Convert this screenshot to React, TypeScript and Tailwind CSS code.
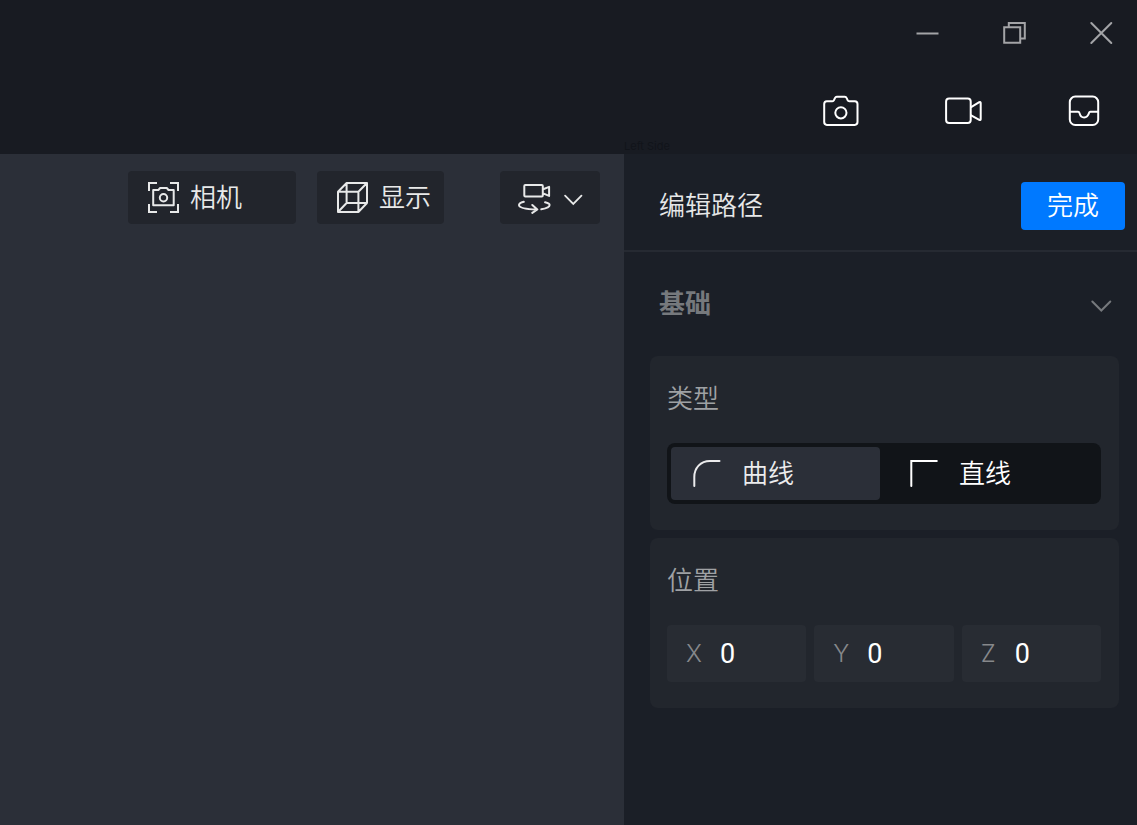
import React, { useState } from 'react';

const IconMinimize = () => (
  <svg width="24" height="24" viewBox="0 0 24 24" fill="none" stroke="currentColor" strokeWidth="2">
    <path d="M1.500 12.500h22" />
  </svg>
);

const IconRestore = () => (
  <svg width="24" height="24" viewBox="0 0 24 24" fill="none" stroke="currentColor" strokeWidth="2">
    <path d="M2.200 6.200h16v15.600h-16zM6.800 6.200V2h16v15.600h-4.600" />
  </svg>
);

const IconClose = () => (
  <svg width="24" height="24" viewBox="0 0 24 24" fill="none" stroke="currentColor" strokeWidth="2" strokeLinecap="round">
    <path d="M2.300 2l20 20M22.300 2l-20 20" />
  </svg>
);

const IconPhoto = () => (
  <svg width="38" height="32" viewBox="0 0 38 32" fill="none" stroke="currentColor" strokeWidth="2" strokeLinejoin="round">
    <path d="M3.800 6.300h5.500q1.200 0 1.700-1.100l.9-2q.7-1.500 1.900-1.500h8q1.300 0 1.900 1.500l.9 2q.5 1.100 1.700 1.100h5.500q2.700 0 2.700 2.800v18q0 2.800-2.800 2.800H3.900q-2.700 0-2.700-2.800v-18q0-2.800 2.600-2.800z" />
    <circle cx="17.900" cy="17.800" r="5.600" />
  </svg>
);

const IconVideo = () => (
  <svg width="38" height="32" viewBox="0 0 38 32" fill="none" stroke="currentColor" strokeWidth="2" strokeLinejoin="round">
    <rect x="2.100" y="3.500" width="24.600" height="24.500" rx="3" />
    <path d="M26.700 12.400l8.600-5.200q1.400-.7 1.400.8v16q0 1.600-1.400.9l-8.600-4.800" />
  </svg>
);

const IconInbox = () => (
  <svg width="32" height="32" viewBox="0 0 32 32" fill="none" stroke="currentColor" strokeWidth="2" strokeLinejoin="round">
    <rect x="1.800" y="1.600" width="28.400" height="28.400" rx="5.500" />
    <path d="M1.800 16.800H10q1.200 0 1.500 1.300 1.100 4.400 4.700 4.400t4.800-4.400q.3-1.300 1.400-1.300h7.800" />
  </svg>
);

const IconFocusCamera = () => (
  <svg width="32" height="32" viewBox="0 0 32 32" fill="none" stroke="currentColor" strokeWidth="2">
    <path d="M1 9V1h8M22 1h8v8M30 22v8h-8M9 30H1v-8" />
    <path d="M5.200 8h5.200l1.700-2h6.700l1.700 2h5.200v15.300H5.200z" strokeLinejoin="round" />
    <circle cx="15.500" cy="15.700" r="3.700" />
  </svg>
);

const IconCube = () => (
  <svg width="32" height="32" viewBox="0 0 32 32" fill="none" stroke="currentColor" strokeWidth="2" strokeLinejoin="round">
    <path d="M1 9.800h20.400V30H1zM9.600 1H30v20H9.600zM1 9.800L9.600 1M21.400 9.800L30 1M21.400 30l8.600-9M1 30l8.600-9" />
  </svg>
);

const IconOrbitCamera = () => (
  <svg width="34" height="32" viewBox="0 0 34 32" fill="none" stroke="currentColor" strokeWidth="2" strokeLinecap="round" strokeLinejoin="round">
    <path d="M8.300 3h16.500q1 0 1 1v9.500q0 1-1 1H8.300q-1 0-1-1V4q0-1 1-1zM26.100 7.200l6-2.300v9l-6-2.500" />
    <path d="M6.800 19.800C4 20.600 2 21.700 2 22.900 2 25.500 9.300 27.100 19.800 27.500M15.300 23l5 4.500-5 3.400M28.100 20.300c2.800.7 4.500 1.500 4.500 2.700 0 1.900-3 3.400-8.300 4.300" />
  </svg>
);

const IconChevron = ({ className = '' }: { className?: string }) => (
  <svg width="22" height="18" viewBox="0 0 22 18" fill="none" stroke="currentColor" strokeWidth="2" strokeLinecap="round" className={className}>
    <path d="M2.300 6.500l9 9 9-9" />
  </svg>
);

const IconCurve = () => (
  <svg width="28" height="28" viewBox="0 0 28 28" fill="none" stroke="currentColor" strokeWidth="2" strokeLinecap="round">
    <path d="M1.300 26V17C1.300 8 7.500 1 17 1h9.500" />
  </svg>
);

const IconCorner = () => (
  <svg width="28" height="28" viewBox="0 0 28 28" fill="none" stroke="currentColor" strokeWidth="2" strokeLinecap="round">
    <path d="M1.300 26V1h25.500" />
  </svg>
);

const windowButtons = [
  { label: '最小化', Icon: IconMinimize },
  { label: '还原', Icon: IconRestore },
  { label: '关闭', Icon: IconClose },
];

const mediaButtons = [
  { label: '拍照', Icon: IconPhoto },
  { label: '录像', Icon: IconVideo },
  { label: '素材', Icon: IconInbox },
];

const pathTypes = [
  { id: 'curve', label: '曲线', Icon: IconCurve },
  { id: 'line', label: '直线', Icon: IconCorner },
];

const axes = ['X', 'Y', 'Z'] as const;

const Header = () => (
  <header className="bg-[#181b22] pt-[13px]">
    <div className="flex justify-end gap-[47px] pr-4 text-[#a3a4a7]">
      {windowButtons.map(({ label, Icon }) => (
        <button key={label} aria-label={label} className="flex h-10 w-10 items-center justify-center">
          <Icon />
        </button>
      ))}
    </div>
    <div className="mt-[38px] flex justify-end gap-[81px] pr-[33px] text-white">
      {mediaButtons.map(({ label, Icon }) => (
        <button key={label} aria-label={label} className="flex h-10 w-10 items-center justify-center">
          <Icon />
        </button>
      ))}
    </div>
    <div className="mt-2 ml-auto w-[513px] text-[11px] leading-[15px] font-normal text-[#11141a]">Left Side</div>
  </header>
);

const Viewport = () => (
  <main className="flex-1 bg-[#2b2f38] pt-[17px]">
    <div className="flex justify-end pr-6 text-[#e8e9e9]">
      <button className="flex h-[53px] w-[168px] items-center gap-[10px] rounded bg-[#22252c] pl-5">
        <IconFocusCamera />
        <span>相机</span>
      </button>
      <button className="ml-[21px] flex h-[53px] w-[127px] items-center gap-[10px] rounded bg-[#22252c] pl-5">
        <IconCube />
        <span>显示</span>
      </button>
      <button aria-label="视角" className="ml-14 flex h-[53px] w-[100px] items-center gap-3 rounded bg-[#22252c] pl-[17px]">
        <IconOrbitCamera />
        <IconChevron className="w-5" />
      </button>
    </div>
  </main>
);

const Card = ({ title, children }: { title: string; children: React.ReactNode }) => (
  <section className="rounded-lg bg-[#22262d] pt-[25px] pr-[18px] pb-[26px] pl-[17px]">
    <h3 className="mb-[26px] leading-9 text-[#9fa1a4]">{title}</h3>
    {children}
  </section>
);

const Sidebar = () => {
  const [type, setType] = useState('curve');
  const [position, setPosition] = useState({ X: '0', Y: '0', Z: '0' });

  return (
    <aside className="w-[513px] shrink-0 bg-[#1b1f27]">
      <div className="flex items-center justify-between border-b-2 border-[#262a32] pt-7 pr-3 pb-5 pl-[35px]">
        <h1 className="text-[#e6e7e8]">编辑路径</h1>
        <button className="h-12 w-[104px] rounded bg-[#0079ff] text-white">完成</button>
      </div>

      <button aria-expanded="true" className="flex h-[104px] w-full items-center justify-between pr-[25px] pl-[35px] text-[#76797d]">
        <span className="font-bold">基础</span>
        <IconChevron />
      </button>

      <div className="flex flex-col gap-2 pr-[18px] pl-[26px]">
        <Card title="类型">
          <div className="grid grid-cols-2 gap-2 rounded-lg bg-[#111418] p-1">
            {pathTypes.map(({ id, label, Icon }) => (
              <label
                key={id}
                className="flex h-[53px] cursor-pointer items-center gap-[21px] rounded pl-[22px] text-white has-checked:bg-[#2b2f38] has-checked:text-[#ececed]"
              >
                <input
                  type="radio"
                  name="path-type"
                  value={id}
                  checked={type === id}
                  onChange={() => setType(id)}
                  className="sr-only"
                />
                <Icon />
                <span>{label}</span>
              </label>
            ))}
          </div>
        </Card>

        <Card title="位置">
          <div className="grid grid-cols-3 gap-2">
            {axes.map((axis) => (
              <div key={axis} className="flex h-[57px] items-center rounded bg-[#282c33] pl-[19px]">
                <label htmlFor={`pos-${axis}`} className="w-[34px] shrink-0 text-2xl font-light text-[#86888b]">
                  {axis}
                </label>
                <input
                  id={`pos-${axis}`}
                  value={position[axis]}
                  onChange={(e) => setPosition({ ...position, [axis]: e.target.value })}
                  className="w-full min-w-0 bg-transparent font-[Roboto,sans-serif] text-[27px] font-normal text-white outline-none"
                />
              </div>
            ))}
          </div>
        </Card>
      </div>
    </aside>
  );
};

export default function App() {
  return (
    <div className="flex min-h-screen flex-col font-[Inter,'Noto_Sans_CJK_SC',sans-serif] text-[26px] leading-9 font-[350]">
      <Header />
      <div className="flex flex-1">
        <Viewport />
        <Sidebar />
      </div>
    </div>
  );
}
